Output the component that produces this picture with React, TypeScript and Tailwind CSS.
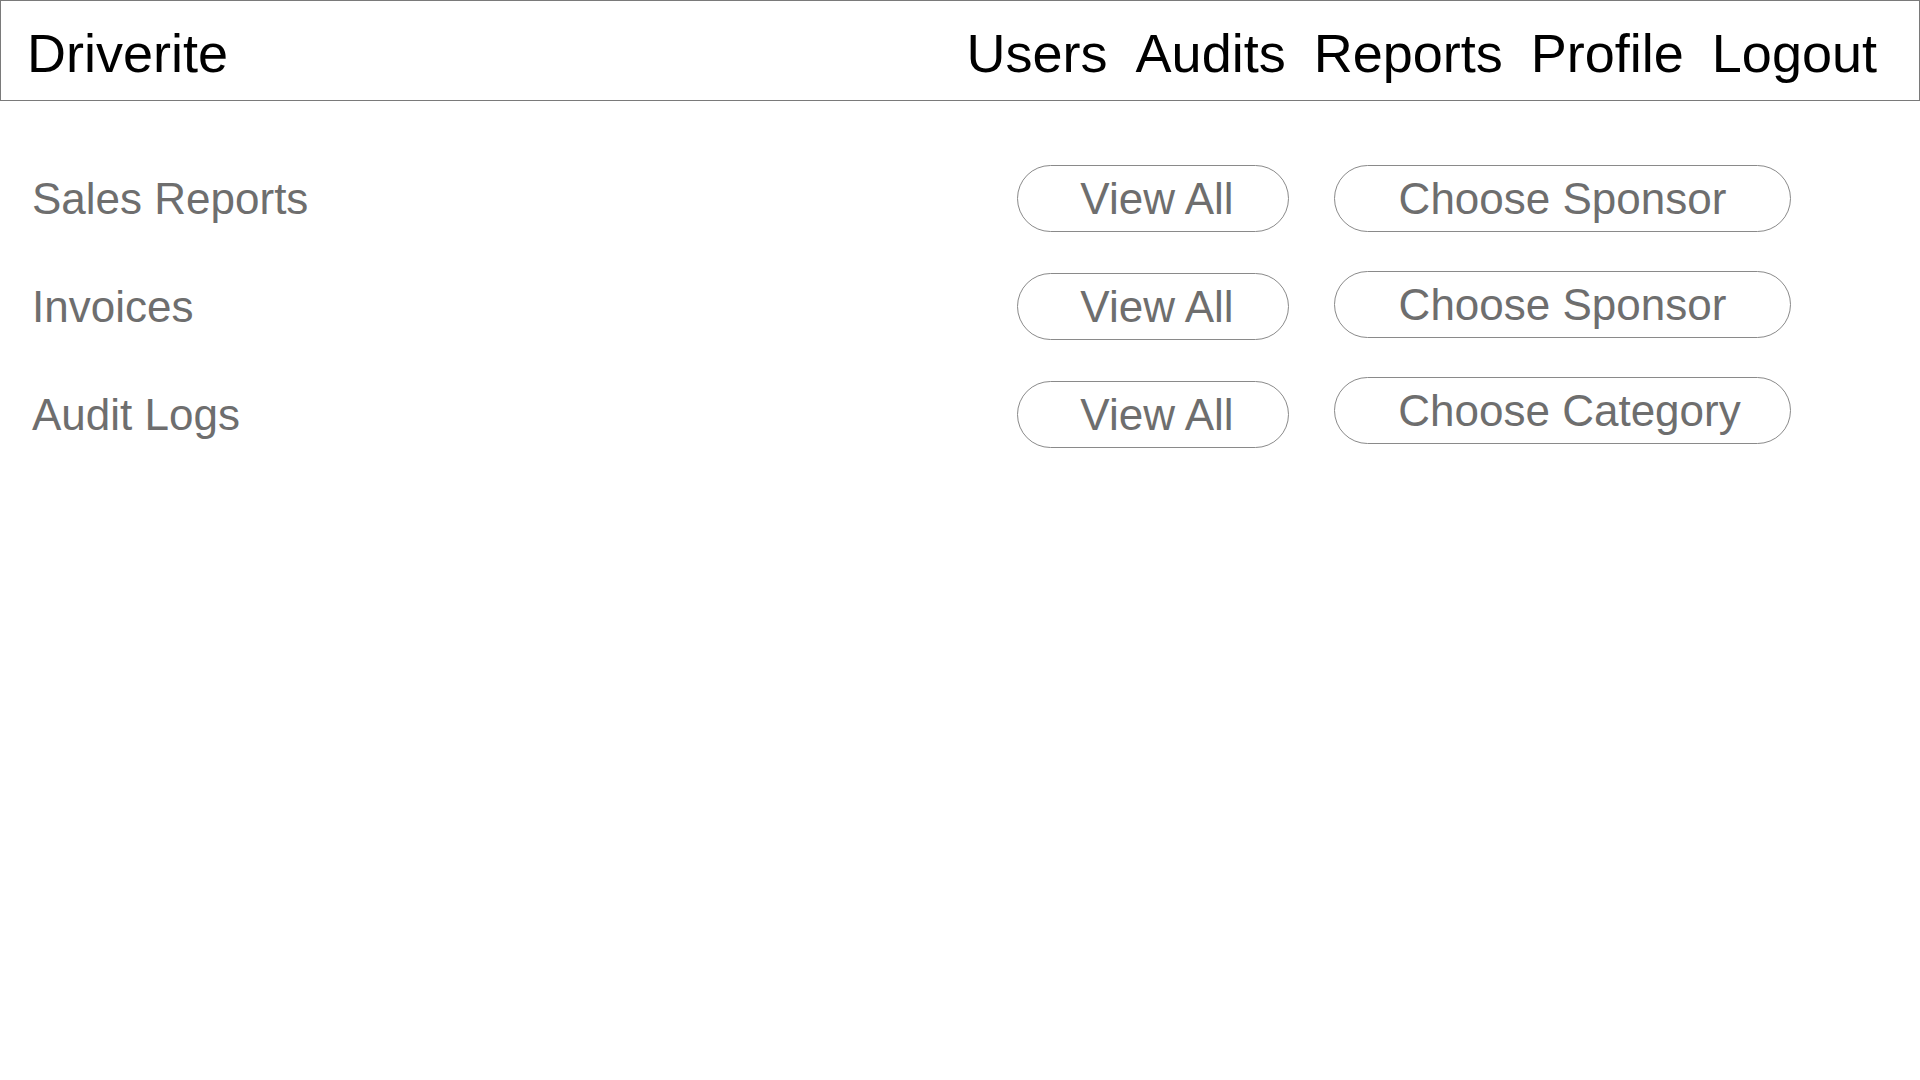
const navItems = ['Users', 'Audits', 'Reports', 'Profile', 'Logout'];

const rows = [
  { label: 'Sales Reports', choose: 'Choose Sponsor', shift: '', chooseText: '' },
  { label: 'Invoices', choose: 'Choose Sponsor', shift: 'mb-[4px]', chooseText: '' },
  { label: 'Audit Logs', choose: 'Choose Category', shift: 'mb-[8px]', chooseText: 'pl-[14px]' },
];

export default function App() {
  return (
    <div className="min-h-screen w-full bg-white" style={{ fontFamily: '"Liberation Sans", Arial, sans-serif' }}>
      {/* Top bar */}
      <header className="h-[101px] w-full border border-[#7a7a7a] flex items-center justify-between pl-[26px] pr-[42px] pt-[5px]">
        <div className="text-[54px] leading-none text-black">Driverite</div>
        <nav className="flex items-center gap-[28px] text-[54px] leading-none text-black">
          {navItems.map((item) => (
            <span key={item}>{item}</span>
          ))}
        </nav>
      </header>

      {/* Report rows */}
      <main className="mt-[64px] flex flex-col gap-[41px] pl-[32px] pr-[129px]">
        {rows.map((row) => (
          <div key={row.label} className="h-[67px] flex items-center">
            <div className="flex-1 text-[44px] leading-none text-[#6e6e6e]">{row.label}</div>
            <button className="h-[67px] w-[272px] rounded-full border border-[#8a8a8a] bg-white pl-2 text-[44px] leading-none text-[#6e6e6e]">
              View All
            </button>
            <button
              className={`ml-[45px] h-[67px] w-[457px] rounded-full border border-[#8a8a8a] bg-white text-[44px] leading-none text-[#6e6e6e] ${row.shift} ${row.chooseText}`}
            >
              {row.choose}
            </button>
          </div>
        ))}
      </main>
    </div>
  );
}
